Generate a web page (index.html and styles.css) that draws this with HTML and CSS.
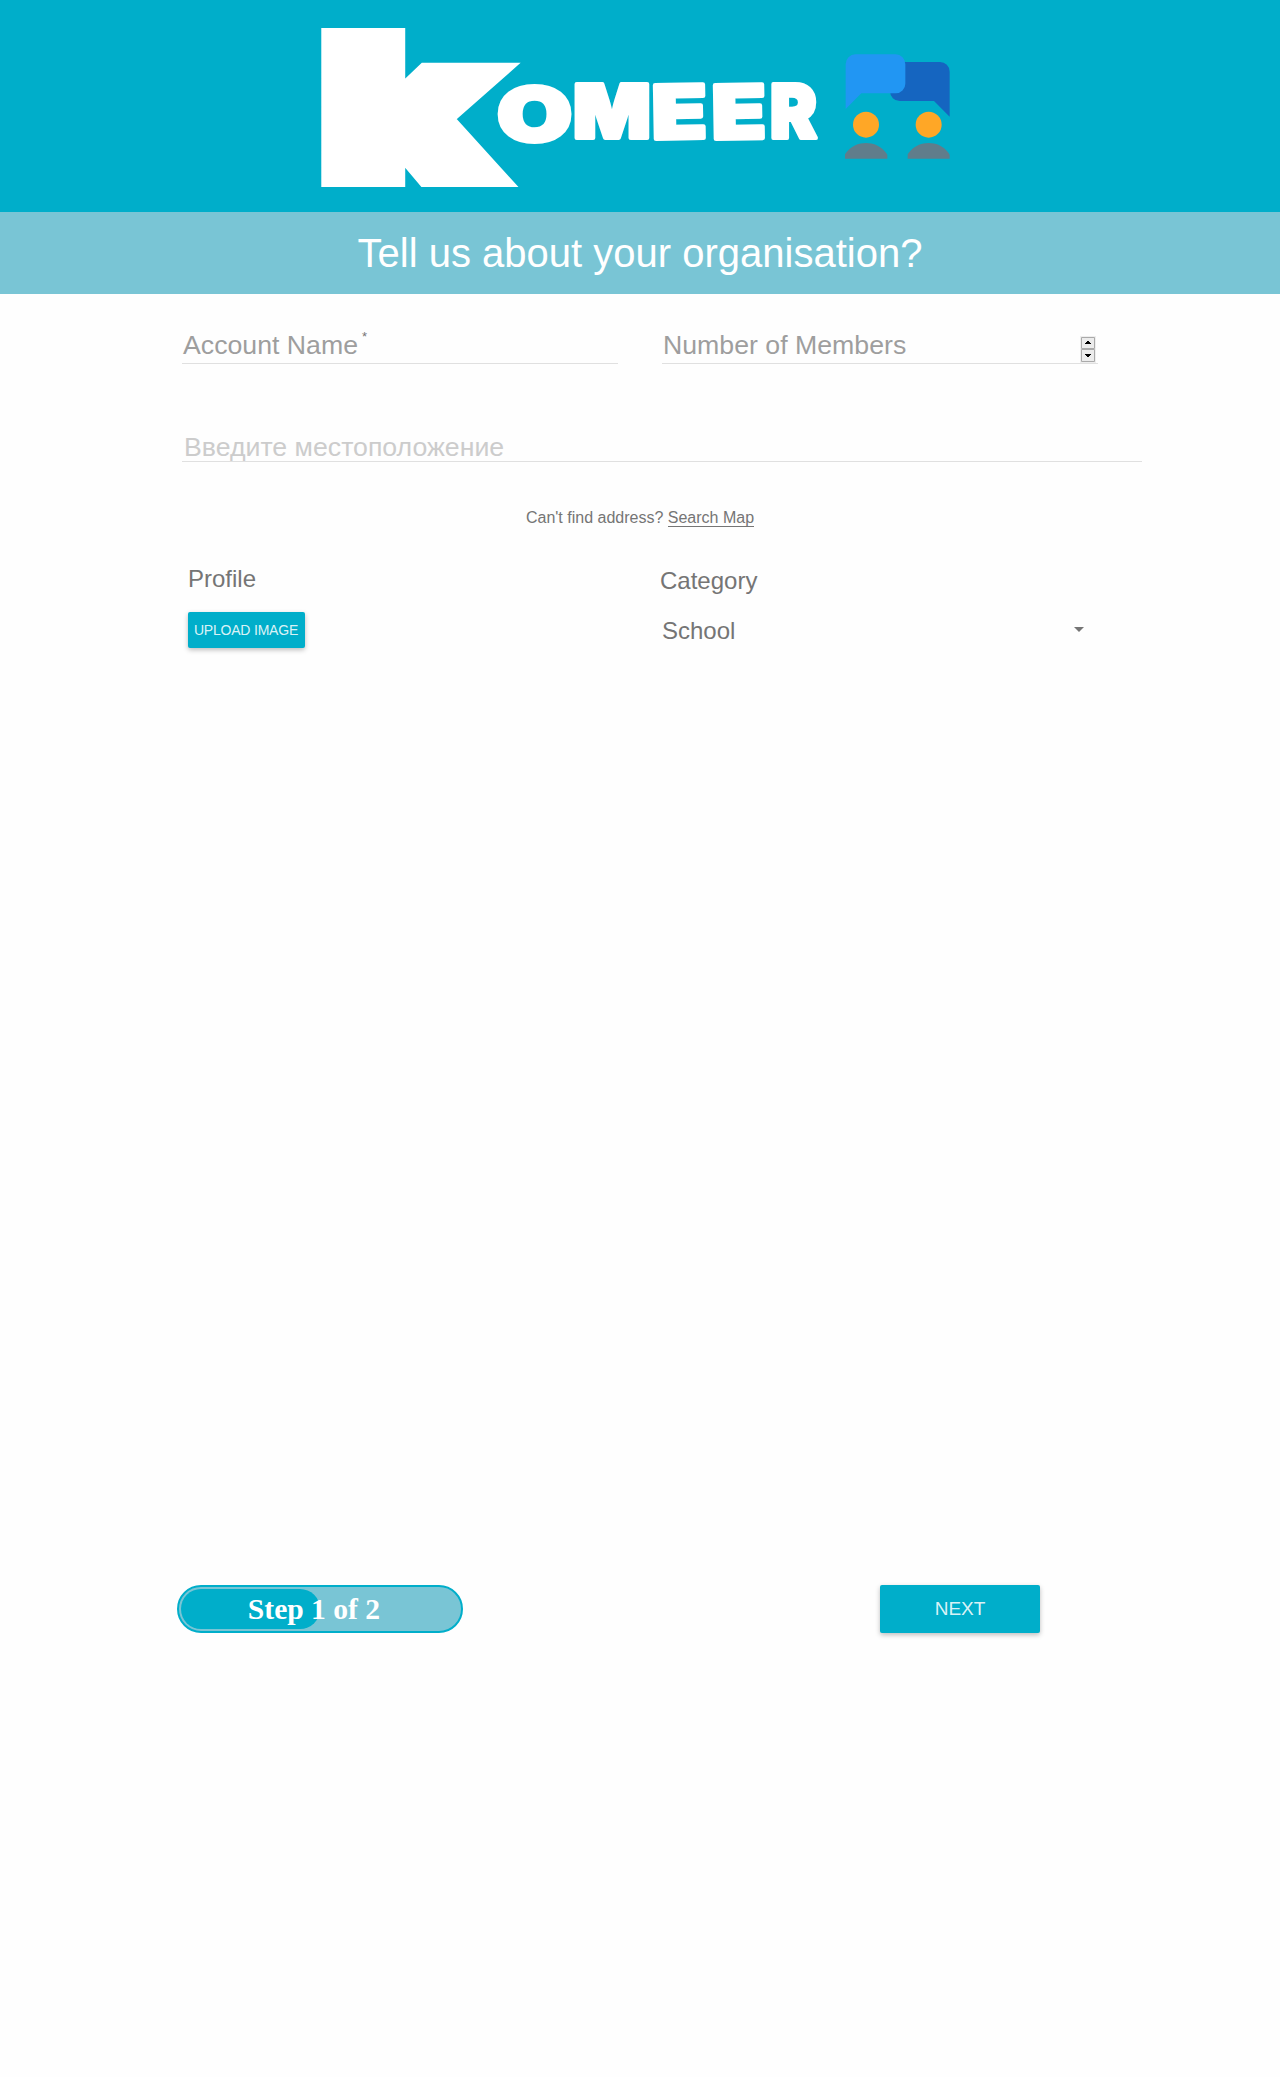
FILE: index.html
```html
<!DOCTYPE html>
<html lang="en">
<head>
<meta charset="utf-8">
<title>Komeer</title>
<link rel="stylesheet" href="styles.css">
</head>
<body>
<header class="header">
  <svg class="wordmark" viewBox="310 0 520 212" role="img" aria-label="Komeer">
    <g class="letters">
      <text class="cap" transform="translate(322 177) scale(1.46 1)">k</text>
      <text transform="translate(497 141) scale(1.31 1)">O</text>
      <text transform="translate(573 138) scale(1.1 1)">M</text>
      <text transform="translate(652 139) rotate(-1) scale(1.22 1)">E</text>
      <text transform="translate(712 139) rotate(-1) scale(1.2 1)">E</text>
      <text transform="translate(770 138) scale(.95 1)">R</text>
    </g>
  </svg>
  <svg class="people" viewBox="0 0 420 390" aria-hidden="true">
    <path fill="#1565c0" d="M209 66H330a29 29 0 0 1 29 29V230L312 183H209a29 29 0 0 1-29-29V95a29 29 0 0 1 29-29z"/>
    <path fill="#2196f3" d="M76 43H197a29 29 0 0 1 29 29V131a29 29 0 0 1-29 29H94L47 207V72a29 29 0 0 1 29-29z"/>
    <g fill="#ffa726"><circle cx="108" cy="254" r="39"/><circle cx="296" cy="254" r="39"/></g>
    <path fill="#607d8b" d="M45 356v-12s18-35 63-35 64 35 64 35v12zM233 356v-12s18-35 63-35 63 35 63 35v12z"/>
  </svg>
</header>
<h1 class="banner">Tell us about your organisation?</h1>
<main class="form">
  <div class="row">
    <div class="field">Account Name<sup class="required">*</sup></div>
    <div class="field">Number of Members
      <svg class="spinner" viewBox="0 0 16 27" aria-hidden="true">
        <path fill="#eee" d="M0 0h16v27H0z"/>
        <path fill="#ececec" stroke="#aaa" d="M1.5 1.5h13v11h-13zM1.5 13.5h13v12h-13z"/>
        <path d="M5 8V7h1V6h1V5h2v1h1v1h1v1zM5 18h6v1h-1v1H9v1H7v-1H6v-1H5z"/>
      </svg>
    </div>
  </div>
  <div class="field location">Введите местоположение</div>
  <p class="map-hint">Can't find address? <span class="map-link">Search Map</span></p>
  <div class="row details">
    <section class="profile">
      <h2 class="label">Profile</h2>
      <button class="button upload">UPLOAD IMAGE</button>
    </section>
    <section class="category">
      <h2 class="label">Category</h2>
      <div class="select">School<span class="caret"></span></div>
    </section>
  </div>
</main>
<footer class="footer">
  <div class="progress"><div class="progress-fill"></div><span class="progress-text">Step 1 of 2</span></div>
  <button class="button next">NEXT</button>
</footer>
</body>
</html>
```

FILE: styles.css
```css
* { box-sizing: border-box; }
body {
  margin: 0;
  min-height: 2077px;
  background: #fefefe;
  color: #757575;
  font-family: "Liberation Sans", Arial, sans-serif;
}
.header {
  display: flex;
  align-items: flex-start;
  height: 212px;
  padding-left: 310px;
  background: #00aeca;
}
.wordmark { width: 520px; height: 212px; overflow: visible; }
.people { width: 140px; height: 130px; margin-top: 40px; }
.letters {
  fill: #fff;
  stroke: #fff;
  stroke-width: 4px;
  stroke-linejoin: round;
  font: 900 74px Inter, "Liberation Sans", sans-serif;
}
.cap { font-size: 191px; stroke-width: 20px; stroke-linejoin: miter; }
.banner {
  height: 82px;
  margin: 0;
  background: #79c5d5;
  color: #fff;
  font-size: 40px;
  font-weight: 400;
  line-height: 82px;
  text-align: center;
}
.form { width: 960px; margin: 35px 0 0 182px; }
.row { display: grid; grid-template-columns: 436px 436px; column-gap: 44px; }
.field {
  display: flex;
  height: 35px;
  padding-left: 1px;
  border-bottom: 1px solid #e0e0e0;
  color: #9e9e9e;
  font-size: 26.7px;
  line-height: 33px;
}
.required { margin-left: 4px; color: #757575; font-size: 13px; line-height: 16px; }
.spinner { width: 16px; height: 27px; margin: 7px 2px 0 auto; }
.location {
  height: 43px;
  margin-top: 55px;
  padding: 7px 0 0 2px;
  color: #ccc;
  line-height: 42px;
}
.map-hint {
  width: 916px;
  margin: 46px 0 0;
  font-size: 16px;
  line-height: 20px;
  text-align: center;
}
.map-link { border-bottom: 1px solid #757575; line-height: 17px; }
.label { margin: 0; font-size: 24px; font-weight: 400; line-height: 28px; }
.details { margin-top: 37px; }
.profile { padding: 0 0 0 6px; }
.category { padding: 2px 0 0; }
.category .label { margin-left: -2px; }
.button {
  display: block;
  padding: 0;
  border: 0;
  border-radius: 2px;
  background: #00aeca;
  box-shadow: 0 2px 5px rgba(0, 0, 0, .26);
  color: rgba(255, 255, 255, .87);
  font-family: inherit;
  text-align: center;
}
.upload { width: 117px; height: 36px; margin-top: 19px; font-size: 14px; letter-spacing: -.2px; padding-right: 1px; }
.select { display: flex; align-items: center; margin-top: 22px; font-size: 24px; line-height: 28px; }
.caret {
  margin: 0 14px 4px auto;
  border: 5px solid transparent;
  border-top-color: #757575;
  border-bottom: 0;
}
.footer { display: flex; gap: 417px; margin: 937px 0 0 177px; }
.progress {
  display: grid;
  align-items: center;
  width: 286px;
  height: 48px;
  padding: 2px;
  border: 2px solid #00aeca;
  border-radius: 24px;
  background: #79c5d5;
}
.progress > * { grid-area: 1 / 1; }
.progress-fill { width: 139px; height: 40px; border-radius: 20px; background: #00aeca; }
.progress-text {
  padding-right: 12px;
  color: #fff;
  font: bold 29.6px/40px "Liberation Serif", "Times New Roman", serif;
  text-align: center;
}
.next { width: 160px; height: 48px; font-size: 19px; }
```
